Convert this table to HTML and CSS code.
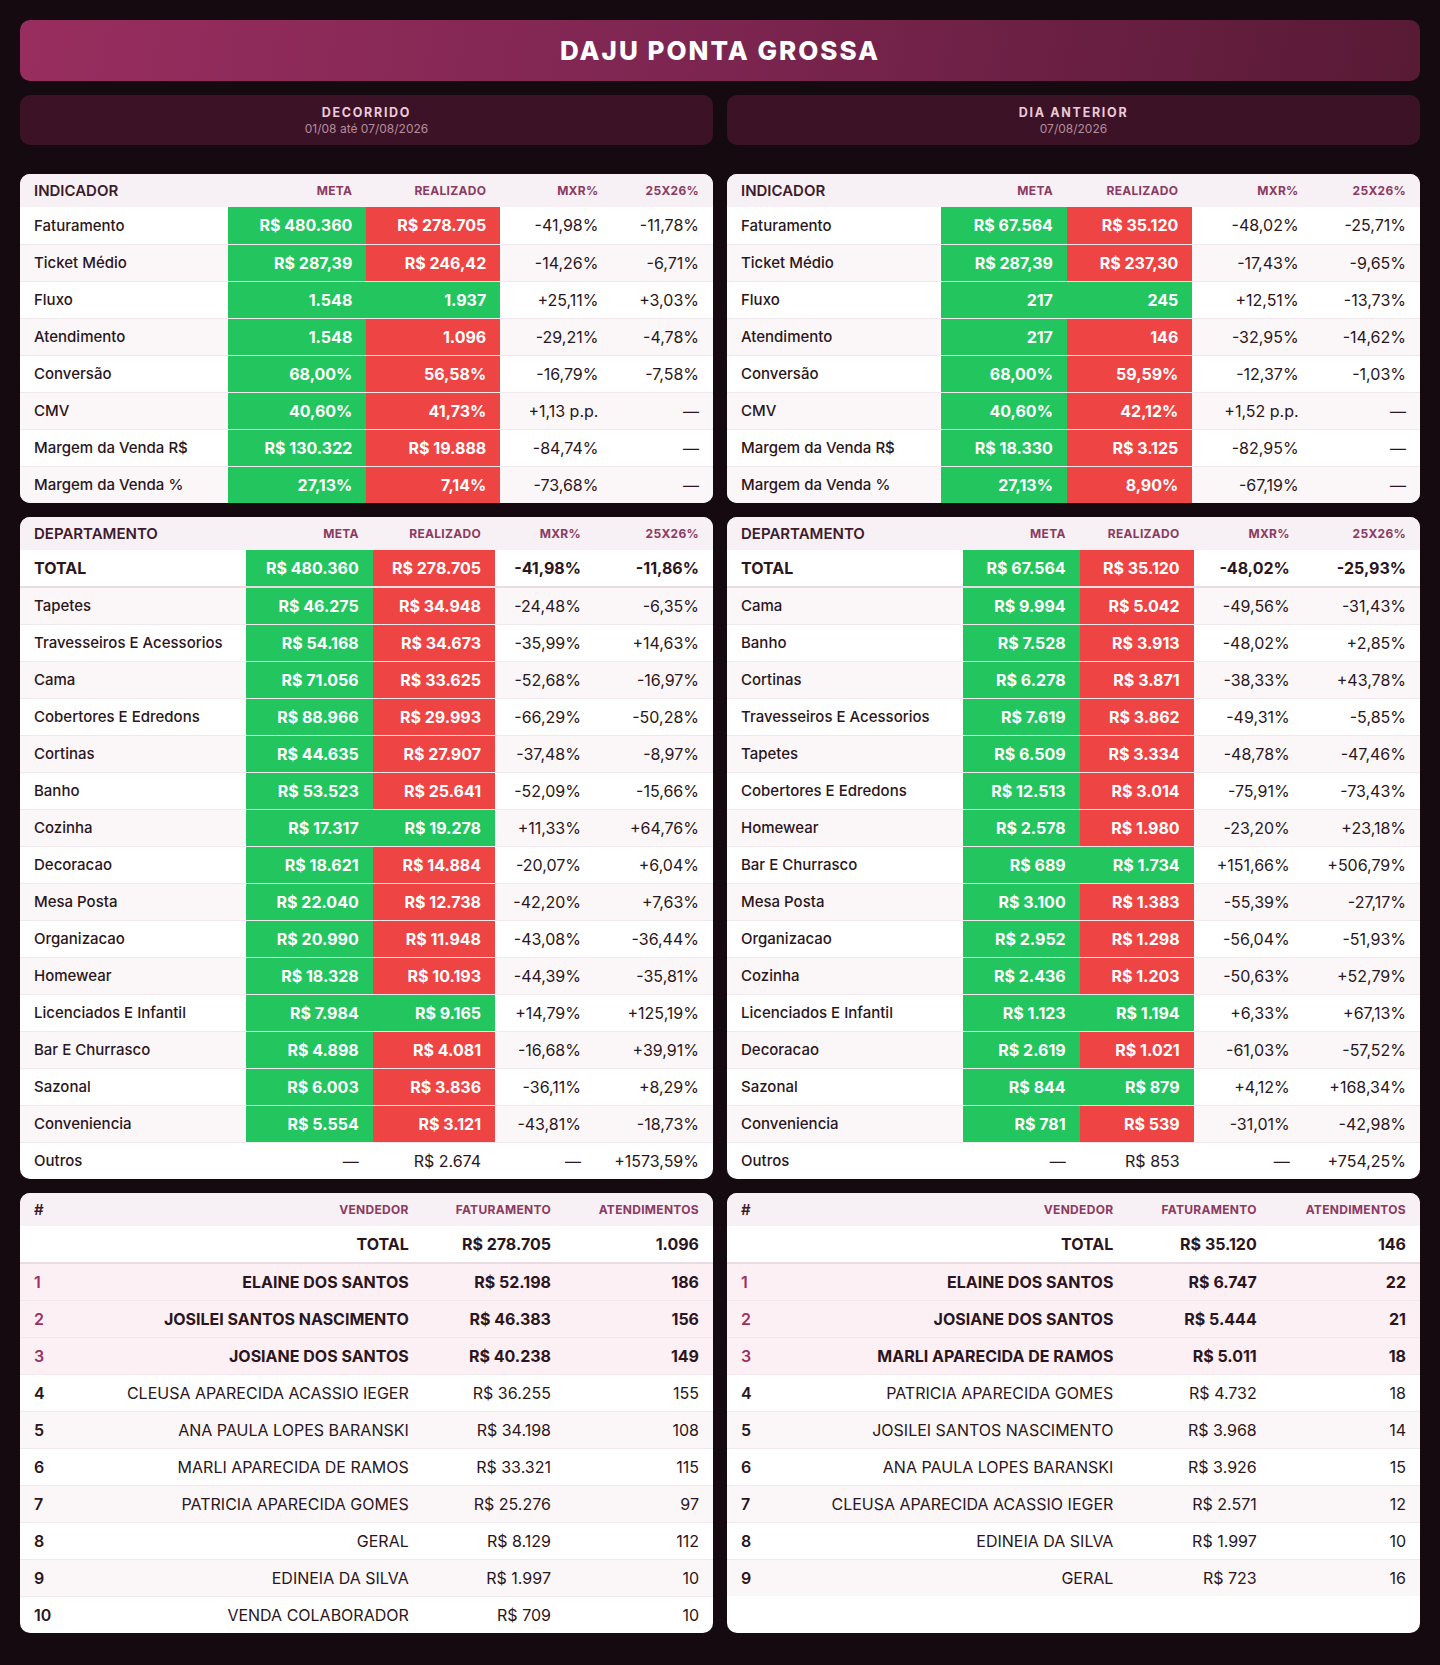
FILE: index.html
```html
<!DOCTYPE html>
<html lang="pt-BR">
<head>
<meta charset="utf-8">
<title>DAJU PONTA GROSSA</title>
<link rel="stylesheet" href="styles.css">
</head>
<body>
<div class="page">
  <header class="title-bar"><h1>DAJU PONTA GROSSA</h1></header>
  <main class="grid">
    <div class="period"><div class="period-title">DECORRIDO</div><div class="period-sub">01/08 até 07/08/2026</div></div>
    <div class="period"><div class="period-title">DIA ANTERIOR</div><div class="period-sub">07/08/2026</div></div>

    <div class="card">
      <table class="tbl">
        <thead><tr><th class="first">INDICADOR</th><th>META</th><th>REALIZADO</th><th>MXR%</th><th>25X26%</th></tr></thead>
        <tbody>
          <tr><td class="lbl">Faturamento</td><td class="g">R$ 480.360</td><td class="r">R$ 278.705</td><td>-41,98%</td><td>-11,78%</td></tr>
          <tr><td class="lbl">Ticket Médio</td><td class="g">R$ 287,39</td><td class="r">R$ 246,42</td><td>-14,26%</td><td>-6,71%</td></tr>
          <tr><td class="lbl">Fluxo</td><td class="g">1.548</td><td class="g">1.937</td><td>+25,11%</td><td>+3,03%</td></tr>
          <tr><td class="lbl">Atendimento</td><td class="g">1.548</td><td class="r">1.096</td><td>-29,21%</td><td>-4,78%</td></tr>
          <tr><td class="lbl">Conversão</td><td class="g">68,00%</td><td class="r">56,58%</td><td>-16,79%</td><td>-7,58%</td></tr>
          <tr><td class="lbl">CMV</td><td class="g">40,60%</td><td class="r">41,73%</td><td>+1,13 p.p.</td><td>—</td></tr>
          <tr><td class="lbl">Margem da Venda R$</td><td class="g">R$ 130.322</td><td class="r">R$ 19.888</td><td>-84,74%</td><td>—</td></tr>
          <tr><td class="lbl">Margem da Venda %</td><td class="g">27,13%</td><td class="r">7,14%</td><td>-73,68%</td><td>—</td></tr>
        </tbody>
      </table>
    </div>
    <div class="card">
      <table class="tbl">
        <thead><tr><th class="first">INDICADOR</th><th>META</th><th>REALIZADO</th><th>MXR%</th><th>25X26%</th></tr></thead>
        <tbody>
          <tr><td class="lbl">Faturamento</td><td class="g">R$ 67.564</td><td class="r">R$ 35.120</td><td>-48,02%</td><td>-25,71%</td></tr>
          <tr><td class="lbl">Ticket Médio</td><td class="g">R$ 287,39</td><td class="r">R$ 237,30</td><td>-17,43%</td><td>-9,65%</td></tr>
          <tr><td class="lbl">Fluxo</td><td class="g">217</td><td class="g">245</td><td>+12,51%</td><td>-13,73%</td></tr>
          <tr><td class="lbl">Atendimento</td><td class="g">217</td><td class="r">146</td><td>-32,95%</td><td>-14,62%</td></tr>
          <tr><td class="lbl">Conversão</td><td class="g">68,00%</td><td class="r">59,59%</td><td>-12,37%</td><td>-1,03%</td></tr>
          <tr><td class="lbl">CMV</td><td class="g">40,60%</td><td class="r">42,12%</td><td>+1,52 p.p.</td><td>—</td></tr>
          <tr><td class="lbl">Margem da Venda R$</td><td class="g">R$ 18.330</td><td class="r">R$ 3.125</td><td>-82,95%</td><td>—</td></tr>
          <tr><td class="lbl">Margem da Venda %</td><td class="g">27,13%</td><td class="r">8,90%</td><td>-67,19%</td><td>—</td></tr>
        </tbody>
      </table>
    </div>

    <div class="card">
      <table class="tbl">
        <thead><tr><th class="first">DEPARTAMENTO</th><th>META</th><th>REALIZADO</th><th>MXR%</th><th>25X26%</th></tr></thead>
        <tbody>
          <tr class="total"><td class="lbl">TOTAL</td><td class="g">R$ 480.360</td><td class="r">R$ 278.705</td><td>-41,98%</td><td>-11,86%</td></tr>
          <tr><td class="lbl">Tapetes</td><td class="g">R$ 46.275</td><td class="r">R$ 34.948</td><td>-24,48%</td><td>-6,35%</td></tr>
          <tr><td class="lbl">Travesseiros E Acessorios</td><td class="g">R$ 54.168</td><td class="r">R$ 34.673</td><td>-35,99%</td><td>+14,63%</td></tr>
          <tr><td class="lbl">Cama</td><td class="g">R$ 71.056</td><td class="r">R$ 33.625</td><td>-52,68%</td><td>-16,97%</td></tr>
          <tr><td class="lbl">Cobertores E Edredons</td><td class="g">R$ 88.966</td><td class="r">R$ 29.993</td><td>-66,29%</td><td>-50,28%</td></tr>
          <tr><td class="lbl">Cortinas</td><td class="g">R$ 44.635</td><td class="r">R$ 27.907</td><td>-37,48%</td><td>-8,97%</td></tr>
          <tr><td class="lbl">Banho</td><td class="g">R$ 53.523</td><td class="r">R$ 25.641</td><td>-52,09%</td><td>-15,66%</td></tr>
          <tr><td class="lbl">Cozinha</td><td class="g">R$ 17.317</td><td class="g">R$ 19.278</td><td>+11,33%</td><td>+64,76%</td></tr>
          <tr><td class="lbl">Decoracao</td><td class="g">R$ 18.621</td><td class="r">R$ 14.884</td><td>-20,07%</td><td>+6,04%</td></tr>
          <tr><td class="lbl">Mesa Posta</td><td class="g">R$ 22.040</td><td class="r">R$ 12.738</td><td>-42,20%</td><td>+7,63%</td></tr>
          <tr><td class="lbl">Organizacao</td><td class="g">R$ 20.990</td><td class="r">R$ 11.948</td><td>-43,08%</td><td>-36,44%</td></tr>
          <tr><td class="lbl">Homewear</td><td class="g">R$ 18.328</td><td class="r">R$ 10.193</td><td>-44,39%</td><td>-35,81%</td></tr>
          <tr><td class="lbl">Licenciados E Infantil</td><td class="g">R$ 7.984</td><td class="g">R$ 9.165</td><td>+14,79%</td><td>+125,19%</td></tr>
          <tr><td class="lbl">Bar E Churrasco</td><td class="g">R$ 4.898</td><td class="r">R$ 4.081</td><td>-16,68%</td><td>+39,91%</td></tr>
          <tr><td class="lbl">Sazonal</td><td class="g">R$ 6.003</td><td class="r">R$ 3.836</td><td>-36,11%</td><td>+8,29%</td></tr>
          <tr><td class="lbl">Conveniencia</td><td class="g">R$ 5.554</td><td class="r">R$ 3.121</td><td>-43,81%</td><td>-18,73%</td></tr>
          <tr><td class="lbl">Outros</td><td>—</td><td>R$ 2.674</td><td>—</td><td>+1573,59%</td></tr>
        </tbody>
      </table>
    </div>
    <div class="card">
      <table class="tbl">
        <thead><tr><th class="first">DEPARTAMENTO</th><th>META</th><th>REALIZADO</th><th>MXR%</th><th>25X26%</th></tr></thead>
        <tbody>
          <tr class="total"><td class="lbl">TOTAL</td><td class="g">R$ 67.564</td><td class="r">R$ 35.120</td><td>-48,02%</td><td>-25,93%</td></tr>
          <tr><td class="lbl">Cama</td><td class="g">R$ 9.994</td><td class="r">R$ 5.042</td><td>-49,56%</td><td>-31,43%</td></tr>
          <tr><td class="lbl">Banho</td><td class="g">R$ 7.528</td><td class="r">R$ 3.913</td><td>-48,02%</td><td>+2,85%</td></tr>
          <tr><td class="lbl">Cortinas</td><td class="g">R$ 6.278</td><td class="r">R$ 3.871</td><td>-38,33%</td><td>+43,78%</td></tr>
          <tr><td class="lbl">Travesseiros E Acessorios</td><td class="g">R$ 7.619</td><td class="r">R$ 3.862</td><td>-49,31%</td><td>-5,85%</td></tr>
          <tr><td class="lbl">Tapetes</td><td class="g">R$ 6.509</td><td class="r">R$ 3.334</td><td>-48,78%</td><td>-47,46%</td></tr>
          <tr><td class="lbl">Cobertores E Edredons</td><td class="g">R$ 12.513</td><td class="r">R$ 3.014</td><td>-75,91%</td><td>-73,43%</td></tr>
          <tr><td class="lbl">Homewear</td><td class="g">R$ 2.578</td><td class="r">R$ 1.980</td><td>-23,20%</td><td>+23,18%</td></tr>
          <tr><td class="lbl">Bar E Churrasco</td><td class="g">R$ 689</td><td class="g">R$ 1.734</td><td>+151,66%</td><td>+506,79%</td></tr>
          <tr><td class="lbl">Mesa Posta</td><td class="g">R$ 3.100</td><td class="r">R$ 1.383</td><td>-55,39%</td><td>-27,17%</td></tr>
          <tr><td class="lbl">Organizacao</td><td class="g">R$ 2.952</td><td class="r">R$ 1.298</td><td>-56,04%</td><td>-51,93%</td></tr>
          <tr><td class="lbl">Cozinha</td><td class="g">R$ 2.436</td><td class="r">R$ 1.203</td><td>-50,63%</td><td>+52,79%</td></tr>
          <tr><td class="lbl">Licenciados E Infantil</td><td class="g">R$ 1.123</td><td class="g">R$ 1.194</td><td>+6,33%</td><td>+67,13%</td></tr>
          <tr><td class="lbl">Decoracao</td><td class="g">R$ 2.619</td><td class="r">R$ 1.021</td><td>-61,03%</td><td>-57,52%</td></tr>
          <tr><td class="lbl">Sazonal</td><td class="g">R$ 844</td><td class="g">R$ 879</td><td>+4,12%</td><td>+168,34%</td></tr>
          <tr><td class="lbl">Conveniencia</td><td class="g">R$ 781</td><td class="r">R$ 539</td><td>-31,01%</td><td>-42,98%</td></tr>
          <tr><td class="lbl">Outros</td><td>—</td><td>R$ 853</td><td>—</td><td>+754,25%</td></tr>
        </tbody>
      </table>
    </div>

    <div class="card">
      <table class="tbl vend">
        <thead><tr><th class="first hash">#</th><th>VENDEDOR</th><th>FATURAMENTO</th><th>ATENDIMENTOS</th></tr></thead>
        <tbody>
          <tr class="total"><td></td><td>TOTAL</td><td>R$ 278.705</td><td>1.096</td></tr>
          <tr class="top"><td class="rank">1</td><td>ELAINE DOS SANTOS</td><td>R$ 52.198</td><td>186</td></tr>
          <tr class="top"><td class="rank">2</td><td>JOSILEI SANTOS NASCIMENTO</td><td>R$ 46.383</td><td>156</td></tr>
          <tr class="top"><td class="rank">3</td><td>JOSIANE DOS SANTOS</td><td>R$ 40.238</td><td>149</td></tr>
          <tr><td class="rank">4</td><td>CLEUSA APARECIDA ACASSIO IEGER</td><td>R$ 36.255</td><td>155</td></tr>
          <tr><td class="rank">5</td><td>ANA PAULA LOPES BARANSKI</td><td>R$ 34.198</td><td>108</td></tr>
          <tr><td class="rank">6</td><td>MARLI APARECIDA DE RAMOS</td><td>R$ 33.321</td><td>115</td></tr>
          <tr><td class="rank">7</td><td>PATRICIA APARECIDA GOMES</td><td>R$ 25.276</td><td>97</td></tr>
          <tr><td class="rank">8</td><td>GERAL</td><td>R$ 8.129</td><td>112</td></tr>
          <tr><td class="rank">9</td><td>EDINEIA DA SILVA</td><td>R$ 1.997</td><td>10</td></tr>
          <tr><td class="rank">10</td><td>VENDA COLABORADOR</td><td>R$ 709</td><td>10</td></tr>
        </tbody>
      </table>
    </div>
    <div class="card">
      <table class="tbl vend">
        <thead><tr><th class="first hash">#</th><th>VENDEDOR</th><th>FATURAMENTO</th><th>ATENDIMENTOS</th></tr></thead>
        <tbody>
          <tr class="total"><td></td><td>TOTAL</td><td>R$ 35.120</td><td>146</td></tr>
          <tr class="top"><td class="rank">1</td><td>ELAINE DOS SANTOS</td><td>R$ 6.747</td><td>22</td></tr>
          <tr class="top"><td class="rank">2</td><td>JOSIANE DOS SANTOS</td><td>R$ 5.444</td><td>21</td></tr>
          <tr class="top"><td class="rank">3</td><td>MARLI APARECIDA DE RAMOS</td><td>R$ 5.011</td><td>18</td></tr>
          <tr><td class="rank">4</td><td>PATRICIA APARECIDA GOMES</td><td>R$ 4.732</td><td>18</td></tr>
          <tr><td class="rank">5</td><td>JOSILEI SANTOS NASCIMENTO</td><td>R$ 3.968</td><td>14</td></tr>
          <tr><td class="rank">6</td><td>ANA PAULA LOPES BARANSKI</td><td>R$ 3.926</td><td>15</td></tr>
          <tr><td class="rank">7</td><td>CLEUSA APARECIDA ACASSIO IEGER</td><td>R$ 2.571</td><td>12</td></tr>
          <tr><td class="rank">8</td><td>EDINEIA DA SILVA</td><td>R$ 1.997</td><td>10</td></tr>
          <tr><td class="rank">9</td><td>GERAL</td><td>R$ 723</td><td>16</td></tr>
        </tbody>
      </table>
    </div>
  </main>
</div>
</body>
</html>
```
FILE: styles.css
```css
* { box-sizing: border-box; }
html, body { margin: 0; padding: 0; }
body {
  background: #150a10;
  font-family: Inter, "Noto Sans", "Liberation Sans", sans-serif;
  color: #2a1520;
}
.page { padding: 20px 20px 34px; }
.title-bar {
  height: 61px;
  border-radius: 10px;
  background: linear-gradient(100deg, #982e5f 0%, #7c2550 50%, #581a35 100%);
  display: flex;
  align-items: center;
  justify-content: center;
  margin-bottom: 14px;
}
.title-bar h1 {
  margin: 0;
  color: #fff;
  font-size: 26px;
  font-weight: 800;
  letter-spacing: 2px;
}
.grid {
  display: grid;
  grid-template-columns: 1fr 1fr;
  column-gap: 14px;
  row-gap: 14px;
}
.period {
  height: 50px;
  background: #3c1226;
  border-radius: 10px;
  display: flex;
  flex-direction: column;
  align-items: center;
  justify-content: center;
  gap: 1px;
  margin-bottom: 15px;
}
.period-title {
  color: #ecc9d9;
  font-size: 12.5px;
  font-weight: 700;
  letter-spacing: 1.7px;
}
.period-sub {
  color: #b48e9f;
  font-size: 12px;
}
.card {
  background: #fff;
  border-radius: 10px;
  overflow: hidden;
}
.tbl {
  width: 100%;
  border-collapse: collapse;
}
.tbl th {
  height: 33px;
  padding: 0 14px;
  background: #f7f0f4;
  text-align: right;
  font-size: 12px;
  font-weight: 700;
  color: #8b3a62;
  letter-spacing: 0.3px;
  white-space: nowrap;
}
.tbl th.first {
  text-align: left;
  font-size: 15px;
  font-weight: 600;
  color: #3d1a2c;
  letter-spacing: 0;
}
.tbl td {
  height: 37px;
  padding: 0 14px;
  text-align: right;
  font-size: 16px;
  white-space: nowrap;
  border-top: 1px solid #f1e8ed;
  color: #2a1520;
}
.tbl tbody tr:first-child td { border-top: none; }
.tbl tbody tr:nth-child(even) td { background: #fbf7f9; }
.tbl td.lbl {
  text-align: left;
  font-size: 15px;
  font-weight: 500;
}
.tbl td.g {
  background: #22c55e !important;
  color: #fff;
  font-weight: 700;
}
.tbl td.r {
  background: #ef4444 !important;
  color: #fff;
  font-weight: 700;
}
.tbl tr.total td {
  font-weight: 700;
  font-size: 16px;
  height: 37px;
  border-bottom: 2px solid #eadbe2;
}
.tbl tr.total td.lbl { font-size: 16px; }
.tbl tr.total + tr td { border-top: none; }
.vend td.rank {
  text-align: left;
  font-weight: 600;
  width: 40px;
}
.vend tr.top td {
  background: #fcf0f5 !important;
  font-weight: 700;
}
.vend tr.top td.rank { color: #9a3160; font-weight: 600; }
.vend th.hash { width: 40px; }
```
